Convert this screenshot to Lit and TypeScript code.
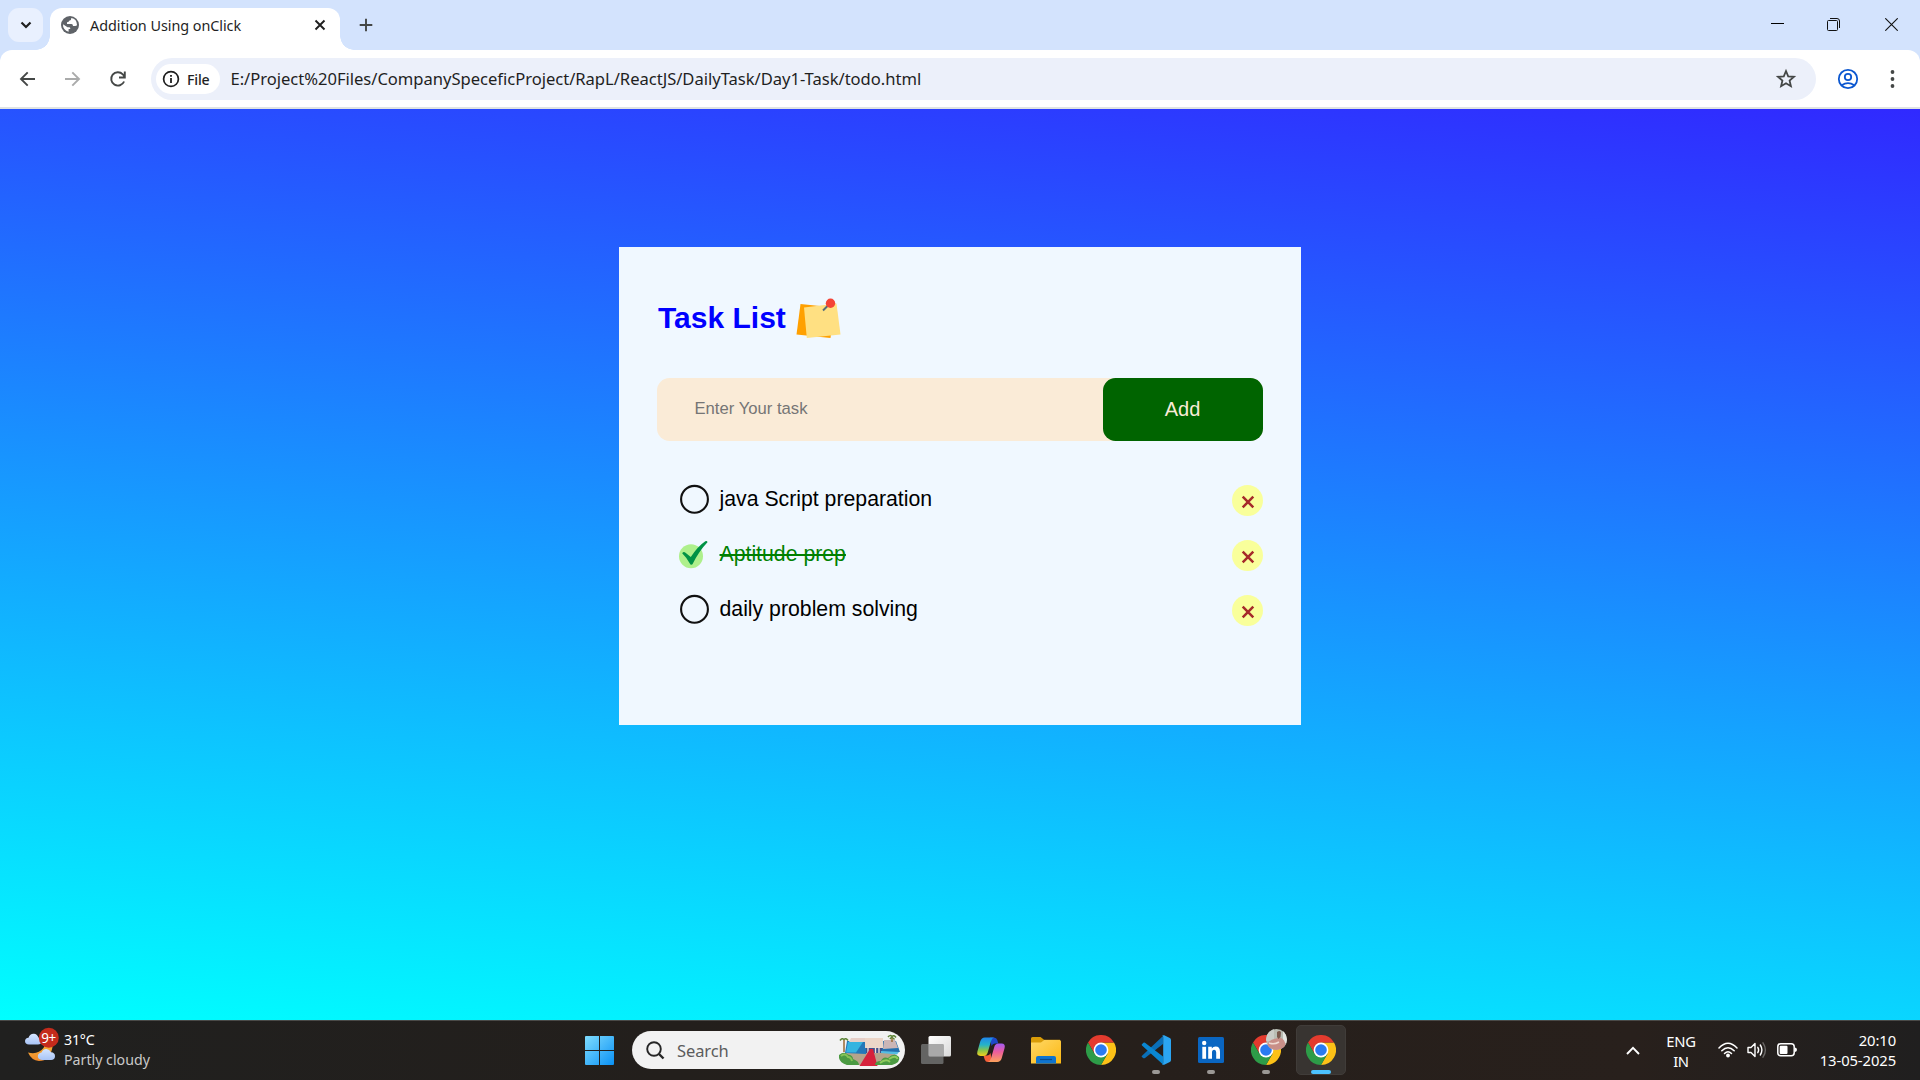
import { LitElement, html, svg, css } from "lit";
import { customElement, state } from "lit/decorators.js";

interface Task {
  label: string;
  done: boolean;
}

const chromeLogo = html`<svg width="30" height="30" viewBox="0 0 30 30">
  <path d="M15 7.500 H28 A15 15 0 0 1 15 30 L21.500 18.700 Z" fill="#fcc117" />
  <path d="M2 7.500 A15 15 0 0 1 28 7.500 H15 L8.500 11.500 L8.600 18.700 Z" fill="#e33b2e" />
  <path d="M2 7.500 L8.500 18.700 L15 22 L21.500 18.700 L15 30 A15 15 0 0 1 2 7.500Z" fill="#2d9c48" />
  <circle cx="15" cy="15" r="7.400" fill="#fff" />
  <circle cx="15" cy="15" r="5.800" fill="#2a7bf0" />
</svg>`;

const taskViewIcon = html`<svg width="30" height="30" viewBox="0 0 30 30">
  <defs>
    <linearGradient id="tv" x1="0" y1="0" x2="1" y2="1">
      <stop offset="0" stop-color="#fff" /><stop offset="1" stop-color="#d9d9d9" />
    </linearGradient>
  </defs>
  <rect x="7.500" y="1" width="22.500" height="20.500" rx="1.500" fill="url(#tv)" />
  <rect x="0" y="9" width="22.500" height="20" rx="1.500" fill="#6b6b6b" fill-opacity=".9" />
  <path d="M7.500 9 H22.500 V21.500 H9 Q7.500 21.500 7.500 20 Z" fill="#a9a9a9" />
</svg>`;

const copilotIcon = html`<svg width="30" height="30" viewBox="0 0 30 30">
  <defs>
    <linearGradient id="cpa" x1="0" y1="0" x2="0" y2="1">
      <stop offset="0" stop-color="#1f86ec" /><stop offset=".4" stop-color="#25b3c9" />
      <stop offset=".7" stop-color="#8ac54a" /><stop offset="1" stop-color="#f3d01c" />
    </linearGradient>
    <linearGradient id="cpb" x1="0" y1="0" x2="0" y2="1">
      <stop offset="0" stop-color="#a35bf5" /><stop offset=".45" stop-color="#ec5d9d" />
      <stop offset="1" stop-color="#fda25c" />
    </linearGradient>
  </defs>
  <path d="M14 2.500 H18 Q20.500 2.500 21.300 5 L22.300 8.500 H19 Q16.500 8.500 15.500 11 Z" fill="#1d49c9" />
  <path d="M16 27 H12 Q9.500 27 8.700 24.500 L7.500 20.500 H11 Q13.500 20.500 14.500 18 Z" fill="#f6603a" />
  <path d="M8.800 2.500 H18 Q15.900 3 14.900 6.500 L11.800 17.300 Q10.900 20.900 7.500 20.900 H4.500 Q.300 20.900 1.400 16.500 L4.300 6.300 Q5.500 2.500 8.800 2.500Z" fill="url(#cpa)" />
  <path d="M21.200 27 H12 Q14.100 26.500 15.100 23 L18.200 12.200 Q19.100 8.500 22.500 8.500 H25.500 Q29.700 8.500 28.600 13 L25.700 23.200 Q24.500 27 21.200 27Z" fill="url(#cpb)" />
</svg>`;

const folderIcon = html`<svg width="30" height="30" viewBox="0 0 30 30">
  <defs>
    <linearGradient id="fd" x1="0" y1="0" x2="1" y2="1">
      <stop offset="0" stop-color="#ffd866" /><stop offset="1" stop-color="#fcb813" />
    </linearGradient>
  </defs>
  <path d="M0 3.500 Q0 2 1.500 2 H9.500 L13 4.800 H29 V10 H0Z" fill="#d99c08" />
  <path d="M0 7.500 H10 L13.200 5 H28.500 Q30 5 30 6.500 V28.500 H0Z" fill="url(#fd)" />
  <path d="M5 28.500 V23 Q5 21 7 21 H23 Q25 21 25 23 V28.500Z" fill="#0f74cf" />
  <path d="M9 24.500 H21" stroke="#0b4b8c" stroke-width="1.200" />
</svg>`;

const codeIcon = html`<svg width="30" height="30" viewBox="0 0 30 30">
  <path d="M1 20.800 L22 1 V9 L4 23 Q3 23.700 2 22.900 L.800 21.800 Q.200 21.300 1 20.800Z" fill="#0a6fb8" />
  <path d="M1 9.200 L2.400 7.800 Q3.200 7.200 4 7.700 L22 21.500 V29.500 L1 10.500 Q.300 9.800 1 9.200Z" fill="#0a86d1" />
  <path d="M21.600 .500 Q22.300 0 23.200 .300 L28.800 3 Q30 3.600 30 5 V25 Q30 26.400 28.800 27 L23.200 29.700 Q22 30.200 21 29.200 Q22.200 29.300 22.200 28 V2 Q22.200 .800 21 .800Z" fill="#2ba5f2" />
</svg>`;

const linkedinIcon = html`<svg width="26" height="26" viewBox="0 0 26 26">
  <rect width="26" height="26" rx="1.500" fill="#0a66c2" />
  <circle cx="6.200" cy="6" r="2.200" fill="#fff" />
  <rect x="4.300" y="9.800" width="3.800" height="12" fill="#fff" />
  <path d="M10.200 9.800 h3.600 v1.700 q1.200-2 3.800-2 q4.400 0 4.400 5.200 v7.100 h-3.800 v-6.300 q0-2.700-2-2.700 q-2.200 0-2.200 2.700 v6.300 h-3.800Z" fill="#fff" />
</svg>`;

const avatar = html`<svg class="avatar" width="21" height="21" viewBox="0 0 21 21">
  <defs><clipPath id="av"><circle cx="10.500" cy="10.500" r="10.500" /></clipPath></defs>
  <g clip-path="url(#av)">
    <rect width="21" height="21" fill="#b9bdb4" />
    <rect x="0" y="0" width="8" height="12" fill="#c9ccc7" />
    <rect x="17" y="2" width="4" height="12" fill="#e4e6e2" />
    <path d="M1 21 Q0 12 8 10 L14 8.500 Q21 11 19 21Z" fill="#c98f88" />
    <path d="M11 3 Q14 1 15 3.500 L14.500 8 L12.500 10 L11 8Z" fill="#7a5a4e" />
    <path d="M3 14 Q8 16 13 13" stroke="#efdcd4" stroke-width="1.500" fill="none" />
  </g>
</svg>`;

@customElement("browser-bar")
export class BrowserBar extends LitElement {
  static styles = css`
    :host { display: block; font-family: "Noto Sans", "Open Sans", sans-serif; color: #1f1f1f; }
    svg { display: block; }
    .strip { display: flex; height: 50px; background: #d3e3fd; box-sizing: border-box; padding: 8px 0 0 8px; }
    .drop { width: 35px; height: 34px; border-radius: 11px; background: #e9f0fe; display: grid; place-items: center; }
    .tab { position: relative; margin-left: 7px; width: 290px; height: 42px; box-sizing: border-box; background: #fff; border-radius: 12px 12px 0 0; display: flex; align-items: center; padding: 0 14px 8px 11px; }
    .tab::before, .tab::after { content: ""; position: absolute; bottom: 0; width: 14px; height: 14px; }
    .tab::before { left: -14px; background: radial-gradient(circle at 0 0, transparent 13.5px, #fff 14px); }
    .tab::after { right: -14px; background: radial-gradient(circle at 100% 0, transparent 13.5px, #fff 14px); }
    .title { margin-left: 11px; flex: 1; font-size: 14.4px; line-height: 20px; white-space: nowrap; letter-spacing: -0.050px; padding-top: 2px; }
    .plus { width: 14px; height: 34px; margin-left: 18.500px; display: grid; place-items: center; }
    .controls { margin-left: auto; display: flex; align-items: center; height: 33px; gap: 43px; padding-right: 22px; }
    .close { margin-left: 2px; }
    .under { background: #d3e3fd; }
    .toolbar { height: 57px; background: #fff; border-radius: 12px 12px 0 0; display: flex; align-items: center; box-sizing: border-box; padding: 0 21px 0 17px; }
    .nav { display: flex; gap: 25px; }
    .omni { margin-left: 23.500px; width: 1665px; height: 42px; border-radius: 21px; background: #ecf0fa; display: flex; align-items: center; box-sizing: border-box; padding: 0 19px 0 5.500px; margin-top: 1px; }
    .chip { height: 30px; width: 64px; border-radius: 15px; background: #fff; display: flex; align-items: center; box-sizing: border-box; padding-left: 6px; gap: 7px; font-size: 14.200px; font-weight: 500; letter-spacing: -0.200px; }
    .url { margin-left: 10.500px; flex: 1; font-size: 16.600px; line-height: 24px; white-space: nowrap; letter-spacing: -0.030px; }
    .profile { margin-left: 21.500px; }
    .dots { margin-left: auto; }
    .edge { height: 2px; background: #dfe3e3; }
  `;

  render() {
    return html`
      <div class="strip">
        <div class="drop">
          <svg width="12" height="8" viewBox="0 0 12 8"><path d="M1.500 1.500 L6 6 L10.500 1.500" fill="none" stroke="#1f1f1f" stroke-width="2.200" /></svg>
        </div>
        <div class="tab">
          <svg width="18" height="18" viewBox="0 0 18 18">
            <circle cx="9" cy="9" r="9" fill="#5f6368" />
            <path d="M10.300 2 Q10.500 4.500 8.200 4.700 Q7.600 6.300 6 6.300 V8 H10.500 Q12 8.200 12 10 H14 Q15.800 10 16 9 A7.100 7.100 0 0 0 10.300 2Z M2 8.300 L6.500 11.200 H8.300 Q9.500 11.500 9.300 13 H7.600 V15.800 A7 7 0 0 1 2 8.300Z" fill="#fff" />
          </svg>
          <div class="title">Addition Using onClick</div>
          <svg width="12" height="12" viewBox="0 0 12 12"><path d="M1.500 1.500 L10.500 10.500 M10.500 1.500 L1.500 10.500" stroke="#1f1f1f" stroke-width="1.900" /></svg>
        </div>
        <div class="plus">
          <svg width="14" height="14" viewBox="0 0 14 14"><path d="M7 .700 V13.300 M.700 7 H13.300" stroke="#444746" stroke-width="1.900" /></svg>
        </div>
        <div class="controls">
          <svg width="13" height="13" viewBox="0 0 13 13"><path d="M0 5.500 H13" stroke="#000" /></svg>
          <svg width="13" height="13" viewBox="0 0 13 13"><rect x=".500" y="2.500" width="10" height="10" rx="1" fill="none" stroke="#111" /><path d="M3 .500 H10 Q12.500 .500 12.500 3 V10" fill="none" stroke="#111" /></svg>
          <svg class="close" width="13" height="13" viewBox="0 0 13 13"><path d="M.300 .300 L12.700 12.700 M12.700 .300 L.300 12.700" stroke="#111" stroke-width="1.100" /></svg>
        </div>
      </div>
      <div class="under">
        <div class="toolbar">
          <div class="nav">
            <svg width="20" height="20" viewBox="0 0 20 20"><path d="M18 10 H4.500 M10.700 3.300 L4 10 L10.700 16.700" fill="none" stroke="#444746" stroke-width="1.900" /></svg>
            <svg width="20" height="20" viewBox="0 0 20 20"><path d="M3 10 H16.500 M10.300 3.300 L17 10 L10.300 16.700" fill="none" stroke="#aaabab" stroke-width="1.900" /></svg>
            <svg width="20" height="20" viewBox="0 0 20 20"><path d="M17.100 12.500 A6.700 6.700 0 1 1 15.800 5.300 L17.200 7.300 M17.800 2.500 V8.500 H12" fill="none" stroke="#444746" stroke-width="1.900" /></svg>
          </div>
          <div class="omni">
            <div class="chip">
              <svg width="18" height="18" viewBox="0 0 18 18"><circle cx="9" cy="9" r="7.400" fill="none" stroke="#1f1f1f" stroke-width="1.700" /><path d="M9 8 V13 M9 5 V6.800" stroke="#1f1f1f" stroke-width="1.800" /></svg>
              <span>File</span>
            </div>
            <div class="url">E:/Project%20Files/CompanySpeceficProject/RapL/ReactJS/DailyTask/Day1-Task/todo.html</div>
            <svg width="22" height="22" viewBox="0 0 22 22"><path d="M11 3 L13.200 8.300 L19 8.800 L14.600 12.600 L15.900 18.200 L11 15.200 L6.100 18.200 L7.400 12.600 L3 8.800 L8.800 8.300Z" fill="none" stroke="#444746" stroke-width="1.800" /></svg>
          </div>
          <svg class="profile" width="22" height="22" viewBox="0 0 22 22">
            <g fill="none" stroke="#0b57d0" stroke-width="1.800"><circle cx="11" cy="11" r="9.200" /><circle cx="11" cy="9" r="3.200" /><path d="M4.700 17.300 Q11 12.800 17.300 17.300" /></g>
          </svg>
          <svg class="dots" width="13" height="20" viewBox="0 0 13 20"><g fill="#444746"><circle cx="6.500" cy="3" r="1.900" /><circle cx="6.500" cy="10" r="1.900" /><circle cx="6.500" cy="17" r="1.900" /></g></svg>
        </div>
      </div>
      <div class="edge"></div>
    `;
  }
}

@customElement("task-list")
export class TaskList extends LitElement {
  @state() private tasks: Task[] = [
    { label: "java Script preparation", done: false },
    { label: "Aptitude prep", done: true },
    { label: "daily problem solving", done: false },
  ];

  static styles = css`
    :host { display: block; width: 682px; height: 478px; box-sizing: border-box; padding: 48px 38px 0; background: aliceblue; font-family: "Liberation Sans", Arial, sans-serif; }
    svg { display: block; }
    .heading { display: flex; align-items: center; gap: 10.500px; height: 46px; margin: 0; font-size: 30px; font-weight: 700; color: #00f; padding-left: 1px; }
    .note { margin-top: 1px; }
    .entry { display: flex; height: 63px; margin-top: 37px; background: #faebd7; border-radius: 12.500px; }
    .field { flex: 1; min-width: 0; border: 0; outline: 0; background: transparent; padding: 0 0 2px 37.500px; font: 16.670px "Liberation Sans", Arial, sans-serif; }
    .field::placeholder { color: #757575; }
    .add { width: 160px; border: 0; border-radius: 12.500px; background: #006400; color: antiquewhite; font: 20px "Liberation Sans", Arial, sans-serif; padding: 0 1px 0 0; }
    .items { list-style: none; margin: 30px 0 0; padding: 0 0 0 22px; }
    .item { display: flex; align-items: center; height: 55px; font-size: 21.250px; color: #000; }
    .text { flex: 1; margin-left: 10.500px; line-height: 24px; }
    .finished .text { color: green; text-decoration: line-through; text-decoration-thickness: 2px; }
    .remove { width: 31px; height: 31px; border: 0; padding: 4px 0 0; border-radius: 50%; background: #f9ff9b; display: grid; place-items: center; margin-top: 3px; }
  `;

  private toggle(index: number) {
    this.tasks = this.tasks.map((t, i) => (i === index ? { ...t, done: !t.done } : t));
  }

  private remove(index: number) {
    this.tasks = this.tasks.filter((_, i) => i !== index);
  }

  private mark(done: boolean) {
    return html`<svg width="30" height="30" viewBox="0 0 30 30">
      ${done
        ? svg`<circle cx="12" cy="17.300" r="12" fill="#aef08c" />
            <path d="M3.200 14.300 Q4.500 12.300 6.500 13.700 L11.800 18 Q18.500 7.500 26.300 2.200 Q28.300 1.700 28.500 3.300 Q20 12 13.500 25.300 Q12.300 26.300 11.300 25.200 Q7.500 18.500 3.200 14.300Z" fill="#009245" />`
        : svg`<circle cx="15.500" cy="15.300" r="13.400" fill="none" stroke="#111" stroke-width="2.100" />`}
    </svg>`;
  }

  render() {
    return html`
      <h2 class="heading">
        <span>Task List</span>
        <svg class="note" width="45" height="41" viewBox="0 0 45 41">
          <path d="M4.500 6 L38 9.500 L34.500 40 L.500 36.500Z" fill="#ffa000" />
          <path d="M8 9.500 L40.500 5.500 L44.500 36.500 L10.800 40Z" fill="#ffe082" />
          <path d="M27 12.500 L34 5.500" stroke="#546e7a" stroke-width="1.900" />
          <circle cx="34.500" cy="5.300" r="4.700" fill="#f44336" />
        </svg>
      </h2>
      <div class="entry">
        <input class="field" placeholder="Enter Your task" />
        <button class="add">Add</button>
      </div>
      <ul class="items">
        ${this.tasks.map(
          (task, i) => html`<li class="item ${task.done ? "finished" : ""}">
            <span @click=${() => this.toggle(i)}>${this.mark(task.done)}</span>
            <span class="text">${task.label}</span>
            <button class="remove" @click=${() => this.remove(i)}>
              <svg width="14" height="14" viewBox="0 0 14 14"><path d="M1.700 1.700 L12.300 12.300 M12.300 1.700 L1.700 12.300" stroke="#a52a2a" stroke-width="2.500" /></svg>
            </button>
          </li>`
        )}
      </ul>
    `;
  }
}

@customElement("task-bar")
export class TaskBar extends LitElement {
  static styles = css`
    :host { display: flex; height: 60px; box-sizing: border-box; border-top: 1px solid #4a4a48; background: linear-gradient(90deg, #20201f, #231f1c 35%, #261f1b 60%, #28201c 85%, #201f1f); font-family: "Noto Sans", "Open Sans", sans-serif; color: #fff; }
    svg { display: block; }
    .weather { width: 572px; box-sizing: border-box; padding: 6px 0 0 24px; display: flex; }
    .sky { margin-right: 4px; }
    .lines { font-size: 14.200px; line-height: 20px; letter-spacing: -0.200px; padding-top: 3px; }
    .muted { color: #c9c9c9; letter-spacing: 0; }
    .cell { position: relative; width: 55px; height: 59px; display: grid; place-items: center; box-sizing: border-box; padding-bottom: 1px; }
    .search { margin: 10px 3px 0 5px; width: 273px; height: 38px; border-radius: 19px; background: #f2f2f2; display: flex; align-items: center; box-sizing: border-box; padding: 0 4px 0 14px; color: #5c5c5c; font-size: 16.500px; letter-spacing: -0.100px; }
    .word { flex: 1; margin-left: 12px; line-height: 24px; padding-top: 1px; }
    .active::before { content: ""; position: absolute; inset: 4px 2.500px 5px; border-radius: 5px; background: #383431; border: 1px solid #403c39; box-sizing: border-box; }
    .cell > svg { position: relative; }
    .pin { position: absolute; left: 23.500px; top: 49px; width: 8px; height: 4px; border-radius: 2px; background: #9b9895; }
    .active .pin { left: 17.500px; width: 20px; background: #4cc2ff; }
    .cell > .avatar { position: absolute; left: 28px; top: 7.500px; }
    .tray { margin-left: auto; display: flex; align-items: center; padding: 0 24px 1px 0; font-size: 14.800px; line-height: 20px; }
    .lang { width: 40px; margin: 1px 17px 0 21px; text-align: center; letter-spacing: -0.300px; }
    .status { display: flex; gap: 9px; align-items: center; }
    .clock { margin-left: 12px; width: 86px; white-space: nowrap; letter-spacing: -0.100px; padding-bottom: 1px; display: flex; flex-direction: column; align-items: flex-end; }
  `;

  render() {
    return html`
      <div class="weather">
        <svg class="sky" width="36" height="36" viewBox="0 0 36 36">
          <defs>
            <linearGradient id="moon" x1="0" y1="0" x2="0" y2="1"><stop offset="0" stop-color="#f9c63c" /><stop offset="1" stop-color="#f08a2c" /></linearGradient>
            <linearGradient id="cl" x1="0" y1="0" x2="0" y2="1"><stop offset="0" stop-color="#d6e6ff" /><stop offset="1" stop-color="#a8c4f6" /></linearGradient>
          </defs>
          <path d="M23 8 Q30 11 28.500 20 Q26 34 15 34 Q7.500 33.500 4 25.500 Q14 28 19.500 21 Q23 15 23 8Z" fill="url(#moon)" />
          <path d="M5 17.500 Q1 17.300 1 14 Q1.200 11 4.500 10.800 Q6 6.500 10 6.800 Q13 7 14.500 10.500 Q17.500 11 17.500 14.500 Q17.300 17.500 14 17.500Z" fill="url(#cl)" />
          <path d="M18 33 Q13.700 32.500 13.800 29 Q14 26 17.500 25.500 Q19 21.800 22.500 22 Q25.500 22.200 27 25.200 Q31 25.500 31 29.200 Q30.800 33 27 33Z" fill="url(#cl)" />
          <circle cx="24.800" cy="10.800" r="10" fill="#c42b1c" />
          <text x="24.600" y="15.800" text-anchor="middle" font-size="13.500" fill="#fff" letter-spacing="-.4">9+</text>
        </svg>
        <div class="lines"><div>31°C</div><div class="muted">Partly cloudy</div></div>
      </div>
      <div class="cell">
        <svg width="29" height="29" viewBox="0 0 29 29">
          <defs><linearGradient id="win" gradientUnits="userSpaceOnUse" x1="0" y1="0" x2="29" y2="29"><stop offset="0" stop-color="#7fdcfe" /><stop offset="1" stop-color="#0a91f5" /></linearGradient></defs>
          <path d="M1 0 H14 V14 H0 V1 Q0 0 1 0Z M15 0 H28 Q29 0 29 1 V14 H15Z M0 15 H14 V29 H1 Q0 29 0 28Z M15 15 H29 V28 Q29 29 28 29 H15Z" fill="url(#win)" />
        </svg>
      </div>
      <div class="search">
        <svg width="19" height="19" viewBox="0 0 19 19"><circle cx="8" cy="8" r="6.800" fill="none" stroke="#262626" stroke-width="1.900" /><path d="M13 13 L17.500 17.500" stroke="#262626" stroke-width="2.400" /></svg>
        <span class="word">Search</span>
        <svg width="62" height="32" viewBox="0 0 62 32">
          <path d="M8 17 H54 L60 25 L50 31 H8 L2 24Z" fill="#b5a48c" />
          <path d="M8 7 H27 V20 L6 19Z" fill="#2478b8" />
          <path d="M9 8 H24 L17 18.500 H7Z" fill="#35b4e0" />
          <path d="M12 4 H27 V8 H10Z" fill="#e6cfc8" />
          <path d="M44 7 H57 L61 18 H41Z" fill="#2470b0" />
          <path d="M45 6 H56 L59 14 L44 15Z" fill="#cbb5b6" />
          <path d="M26 4 H44 V14 H26Z" fill="#ecd6c8" />
          <path d="M27 14 H43 V19 H27Z" fill="#40518c" />
          <path d="M29 13 V19 M36.500 13 V19 M40 13 V19" stroke="#f3dfd5" stroke-width="1.300" />
          <path d="M42 17 L60 18 L58 20.500 L42 19Z" fill="#55bce4" />
          <path d="M31 15 H34 L38.500 32 H20.500Z" fill="#d6213b" />
          <path d="M0 21 Q5 17 9 20.500 Q14 21 14 25 Q20 27 20 31 H8 Q1 29 0 24Z" fill="#4b9a42" />
          <path d="M2 22 Q6 18.500 9 23 Q12 23 13 27" stroke="#86c456" stroke-width="2" fill="none" />
          <path d="M36 31 Q36 27 42 27 Q44 22 49 24 Q55 18 60 23 Q62 28 53 31Z" fill="#4b9a42" />
          <path d="M41 29 Q47 24 51 28 M50 25 Q57 20.500 58.500 25" stroke="#8fcb5e" stroke-width="1.800" fill="none" />
          <path d="M5 6 V18 M53 3 V8" stroke="#9a6a35" stroke-width="1.500" />
          <path d="M1 6.500 Q3 3.500 5 5.500 Q7 3.500 9 6.500 M49 3 Q51 .500 53 2.500 Q55 .500 57 3.500 M51 5 Q53 2 55.500 5.500" stroke="#5c8437" stroke-width="1.500" fill="none" />
        </svg>
      </div>
      <div class="cell">${taskViewIcon}</div>
      <div class="cell">${copilotIcon}</div>
      <div class="cell">${folderIcon}</div>
      <div class="cell">${chromeLogo}</div>
      <div class="cell">${codeIcon}<span class="pin"></span></div>
      <div class="cell">${linkedinIcon}<span class="pin"></span></div>
      <div class="cell">${chromeLogo}${avatar}<span class="pin"></span></div>
      <div class="cell active">${chromeLogo}<span class="pin"></span></div>
      <div class="tray">
        <svg width="14" height="9" viewBox="0 0 14 9"><path d="M1 8 L7 1.800 L13 8" fill="none" stroke="#fff" stroke-width="1.900" /></svg>
        <div class="lang"><div>ENG</div><div>IN</div></div>
        <div class="status">
          <svg width="20" height="16" viewBox="0 0 20 16"><g fill="none" stroke="#fff" stroke-width="1.500" stroke-linecap="round"><path d="M1 6 Q10 -3.500 19 6" /><path d="M3.800 8.800 Q10 2.500 16.200 8.800" /><path d="M6.500 11.500 Q10 8 13.500 11.500" /></g><circle cx="10" cy="13.500" r="1.900" fill="#fff" /></svg>
          <svg width="21" height="18" viewBox="0 0 21 18"><g fill="none" stroke="#fff" stroke-width="1.400" stroke-linecap="round" stroke-linejoin="round"><path d="M1 6.500 H4 L8 2.500 V15.500 L4 11.500 H1Z" /><path d="M10.800 6.300 Q12.500 9 10.800 11.700 M13.300 4 Q16.500 9 13.300 14" /><path d="M16 1.800 Q20.800 9 16 16.200" stroke="#6b6866" /></g></svg>
          <svg width="21" height="14" viewBox="0 0 21 14"><rect x=".800" y=".800" width="16.400" height="12" rx="3" fill="none" stroke="#fff" stroke-width="1.500" /><rect x="2.700" y="2.700" width="7.800" height="8.200" rx="1" fill="#fff" /><path d="M18 4.500 Q20 5 20 6.800 Q20 8.600 18 9.100Z" fill="#fff" /></svg>
        </div>
        <div class="clock"><div>20:10</div><div>13-05-2025</div></div>
      </div>
    `;
  }
}

@customElement("app-root")
export class AppRoot extends LitElement {
  static styles = css`
    :host { display: flex; flex-direction: column; width: 1920px; height: 1080px; overflow: hidden; }
    .page { flex: 1; display: flex; justify-content: center; align-items: flex-start; padding-top: 138px; background: linear-gradient(6.5deg, aqua, #3029ff); }
  `;

  render() {
    return html`
      <browser-bar></browser-bar>
      <main class="page"><task-list></task-list></main>
      <task-bar></task-bar>
    `;
  }
}
